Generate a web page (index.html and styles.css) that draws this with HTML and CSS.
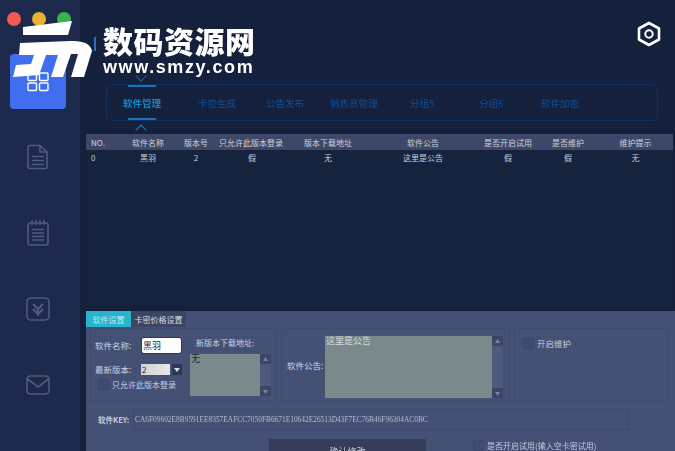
FILE: index.html
```html
<!DOCTYPE html>
<html lang="zh">
<head>
<meta charset="utf-8">
<title>软件管理</title>
<link rel="stylesheet" href="styles.css">
</head>
<body>
<div class="app">
  <aside class="sidebar">
    <div class="side-tile">
      <svg class="tile-icon" width="22" height="22" viewBox="0 0 22 22"><g fill="none" stroke="#fff" stroke-width="1.4"><rect x="1" y="2" width="8.5" height="7.5" rx="1"/><rect x="12.5" y="2" width="8.5" height="7.5" rx="1"/><rect x="1" y="12" width="8.5" height="7.5" rx="1"/><rect x="12.5" y="12" width="8.5" height="7.5" rx="1"/></g></svg>
    </div>
    <div class="side-item"><svg width="22" height="26" viewBox="0 0 22 26"><g fill="none" stroke="#4f5b7d" stroke-width="1.6"><path d="M2.5 1.5H13L20 8V23a1.5 1.5 0 0 1-1.5 1.5h-16A1.500 1.500 0 0 1 1 23V3a1.500 1.500 0 0 1 1.500-1.500Z"/><path d="M13 1.500V8H20M5 12.500H17M5 16.500H17M5 20.500H17"/></g></svg></div>
    <div class="side-item"><svg width="22" height="26" viewBox="0 0 22 26"><g fill="none" stroke="#4f5b7d" stroke-width="1.600"><rect x="1" y="3" width="20" height="22" rx="2"/><path d="M5 0V5M9 0V5M13 0V5M17 0V5"/><path d="M5 9.500H17M5 13H17M5 16.500H17M5 20H17"/></g></svg></div>
    <div class="side-item"><svg width="24" height="24" viewBox="0 0 24 24"><g fill="none" stroke="#4f5b7d" stroke-width="1.600"><rect x="1" y="1" width="22" height="22" rx="4"/><path d="M7 7L12 12L17 7M7 12L12 17L17 12M12 12V19" stroke-width="2.200"/></g></svg></div>
    <div class="side-item"><svg width="24" height="20" viewBox="0 0 24 20"><g fill="none" stroke="#4f5b7d" stroke-width="1.600"><rect x="1" y="1" width="22" height="18" rx="3.500"/><path d="M1.500 4L12 12L22.500 4"/></g></svg></div>
  </aside>

  <main class="main">
    <header class="topbar">
      <span class="title-bar"></span>
      <svg class="gear" width="24" height="26" viewBox="0 0 24 26"><path d="M12 2L22 7.500V18.500L12 24L2 18.500V7.500Z" fill="none" stroke="#fff" stroke-width="2.600" stroke-linejoin="round"/><circle cx="12" cy="13" r="3.700" fill="none" stroke="#fff" stroke-width="2"/></svg>
    </header>

    <nav class="nav">
      <span class="nav-tab active">软件管理</span>
      <span class="nav-tab">卡密生成</span>
      <span class="nav-tab">公告发布</span>
      <span class="nav-tab">销售员管理</span>
      <span class="nav-tab">分组5</span>
      <span class="nav-tab">分组6</span>
      <span class="nav-tab">软件加密</span>
    </nav>

    <section class="table">
      <div class="row head">
        <span class="left">NO.</span><span>软件名称</span><span>版本号</span><span class="clip">只允许此版本登录</span><span>版本下载地址</span><span>软件公告</span><span>是否开启试用</span><span>是否维护</span><span>维护提示</span>
      </div>
      <div class="row">
        <span class="left">0</span><span>黑羽</span><span>2</span><span>假</span><span>无</span><span>这里是公告</span><span>假</span><span>假</span><span>无</span>
      </div>
    </section>

    <section class="panel">
      <div class="tabs">
        <span class="tab on">软件设置</span>
        <span class="tab">卡密价格设置</span>
      </div>
      <div class="groups">
        <div class="group g1">
          <div class="g1-left">
            <div class="field"><span class="lbl">软件名称:</span><span class="input">黑羽</span></div>
            <div class="field"><span class="lbl">最新版本:</span><span class="select">2</span><span class="arrow"></span></div>
            <label class="check c1"><span class="box"></span>只允许此版本登录</label>
          </div>
          <div class="g1-right">
            <span class="lbl url">新版本下载地址:</span>
            <div class="area small"><span class="area-text">无</span><span class="scroll"><i>▲</i><i>▼</i></span></div>
          </div>
        </div>
        <div class="group g2">
          <span class="lbl">软件公告:</span>
          <div class="area big"><span class="area-text">这里是公告</span><span class="scroll"><i>▲</i><i>▼</i></span></div>
        </div>
        <div class="group g3">
          <label class="check"><span class="box"></span>开启维护</label>
        </div>
      </div>
      <div class="key-row">
        <span class="key-lbl">软件KEY:</span>
        <div class="key">CA6F09602E8B9591EE8357EAFCC7050FB6671E10642E26513D43F7EC76B46F96304AC0BC</div>
      </div>
      <div class="bottom">
        <span class="btn">确认修改</span>
        <label class="check"><span class="box"></span>是否开启试用(输入空卡密试用)</label>
      </div>
    </section>
  </main>
</div>

<div class="lights"><i class="red"></i><i class="amber"></i><i class="green"></i></div>

<div class="watermark">
  <svg width="95" height="62" viewBox="0 0 95 62"><path fill="#fff" d="M11 7L60 1L56 15H11ZM8 23L58 21Q78 20 80 31L72 57H59L66 34H59L51 57H39L46 35H34L27 55L1 57L4 45L19 44L22 35H7Z"/></svg>
  <div class="wm-text">
    <div class="wm-cn">数码资源网</div>
    <div class="wm-url">www.smzy.com</div>
  </div>
</div>
</body>
</html>
```

FILE: styles.css
```css
* { box-sizing: border-box; }
html, body { margin: 0; height: 100%; overflow: hidden; background: #14203c; }
body { font-family: "Noto Sans CJK SC", "Noto Sans", sans-serif; font-size: 8px; color: #c8cfdc; }

.app { display: flex; width: 675px; height: 451px; overflow: hidden; filter: blur(0.35px); }

/* sidebar */
.sidebar { width: 80px; flex: none; background: #1e2a4b; display: flex; flex-direction: column; align-items: stretch; padding: 54px 14px 0 10px; }
.side-tile { width: 56px; height: 55px; background: #3f6ff0; border-radius: 4px; display: flex; justify-content: center; align-items: flex-end; padding-bottom: 16px; flex: none; }
.side-item { height: 76px; display: flex; justify-content: center; align-items: center; flex: none; }
.side-tile + .side-item { margin-top: 10px; }

/* main */
.main { flex: 1; min-width: 0; display: flex; flex-direction: column; padding-left: 6px; }
.topbar { height: 84px; flex: none; display: flex; justify-content: space-between; align-items: flex-start; padding: 21px 14px 0 8px; }
.title-bar { width: 2px; height: 14px; background: #2f6fc0; margin-top: 16px; }
.gear { flex: none; }

.nav { height: 37px; flex: none; margin: 0 17px 0 20px; padding-left: 16px; border: 1px solid #12305f; border-radius: 6px; display: grid; grid-template-columns: 75px 68px 64px 80px 69px 62px auto; align-items: center; position: relative; }
.nav-tab { color: #0f4f9a; font-size: 9.500px; white-space: nowrap; position: relative; }
.nav-tab.active { color: #1487c9; font-weight: 700; }
.nav-tab.active::before, .nav-tab.active::after { content: ""; position: absolute; left: 5px; width: 28px; height: 2px; background: #1a73b5; }
.nav-tab.active::before { top: -11px; }
.nav-tab.active::after { bottom: -10px; }
.nav::before, .nav::after { content: ""; position: absolute; left: 30px; width: 7px; height: 7px; border-left: 1.500px solid #1f7fc0; border-top: 1.500px solid #1f7fc0; }
.nav::before { top: -13px; transform: rotate(225deg); border-color: #1a5f9c; }
.nav::after { bottom: -14px; transform: rotate(45deg); }

.table { margin: 13px 2px 0 0; height: 171px; flex: none; background: #15233d; }
.row { display: grid; grid-template-columns: 34px 56px 40px 72px 80px 110px 60px 60px 75px; height: 15px; align-items: center; text-align: center; font-size: 8px; }
.row span { white-space: nowrap; overflow: hidden; }
.row .left { text-align: left; padding-left: 5px; }
.row .clip { direction: rtl; padding: 0 5px; }
.head { background: #3d4767; height: 16px; color: #cdd3df; }

/* settings panel */
.panel { flex: 1; min-height: 0; margin-top: 6px; background: #455174; }
.tabs { display: flex; height: 16px; }
.tab { width: 55px; background: #3a4565; display: flex; align-items: center; justify-content: center; font-size: 8px; color: #d7dbe6; }
.tab.on { width: 45px; background: #27b4cf; color: #bdeaf2; }
.groups { display: flex; margin: 1px 7px 0 4px; gap: 4px; height: 74px; }
.group { border: 1px solid #3f4b6e; border-radius: 1px; flex: none; }
.lbl { color: #ccd2e0; white-space: nowrap; font-size: 8.500px; }

.g1 { width: 187px; display: flex; padding: 8px 5px 0 4px; }
.g1-left { width: 95px; flex: none; display: flex; flex-direction: column; }
.field { display: flex; align-items: center; height: 16px; margin-bottom: 8px; }
.field .lbl { width: 47px; flex: none; }
.field .select { margin-left: -1px; }
.input { width: 39px; height: 15px; background: #fff; color: #222; border-radius: 2px; padding-left: 1px; font-size: 9px; line-height: 15px; box-shadow: 0 0 0 1px #2e3a5c; }
.select { width: 29px; height: 11px; background: linear-gradient(90deg, #cfd2d4, #e8e8e8); color: #223; line-height: 11px; font-size: 8px; padding-left: 1px; }
.arrow { width: 10px; height: 11px; margin-left: 2px; background: #2d3857; position: relative; }
.arrow::after { content: ""; position: absolute; left: 2px; top: 4px; border: 3px solid transparent; border-top: 4px solid #d8dce6; }
.check { display: flex; align-items: center; gap: 3px; color: #c5cce0; font-size: 8px; white-space: nowrap; }
.c1 { padding-left: 3px; margin-top: -6px; }
.box { width: 11px; height: 11px; flex: none; background: #414d70; border: 1px solid #3a4668; border-radius: 2px; }

.g1-right { flex: 1; display: flex; flex-direction: column; align-items: flex-start; }
.url { margin: 0 0 6px 6px; font-size: 8px; }
.area { display: flex; background: #7a8a8b; }
.area-text { flex: 1; color: #1d2436; font-size: 9px; line-height: 10px; padding-left: 1px; }
.scroll { background: #4d5a7c; display: flex; flex-direction: column; justify-content: space-between; }
.scroll i { height: 10px; background: #3b4666; color: #7a86a0; font-style: normal; font-size: 5px; line-height: 10px; text-align: center; }
.small { width: 81px; height: 42px; }
.small .scroll, .big .scroll { width: 11px; flex: none; }
.g2 { width: 229px; display: flex; align-items: center; padding: 0 4px 0 5px; }
.g2 .lbl { width: 38px; flex: none; }
.big { width: 178px; height: 62px; margin-top: 4px; }
.big .area-text { color: #d4d8dc; }
.g3 { width: 154px; padding: 8px 0 0 8px; }
.g3 .check { font-size: 8.500px; }

.key-row { display: flex; align-items: center; margin: 7px 0 0 12px; height: 21px; }
.key-lbl { width: 35px; flex: none; font-size: 7.500px; font-weight: 700; color: #c5cce0; }
.key { width: 496px; height: 21px; border: 1px solid #3d496c; padding-left: 1px; font-family: "Liberation Serif", serif; font-size: 7.400px; line-height: 19px; color: #b3bbce; white-space: nowrap; overflow: hidden; }
.bottom { display: flex; margin-top: 9px; padding-left: 183px; gap: 47px; }
.btn { width: 157px; height: 30px; background: #363d58; color: #c8cfdc; font-size: 9px; text-align: center; padding-top: 6px; }
.bottom .check { align-self: flex-start; margin-top: 1px; }

/* overlays */
.lights { position: absolute; left: 7px; top: 12px; display: flex; gap: 11px; }
.lights i { width: 14px; height: 14px; border-radius: 50%; }
.red { background: #f05a50; }
.amber { background: #e8b32f; }
.green { background: #36b54a; }

.watermark { position: absolute; left: 12px; top: 20px; display: flex; color: #fff; }
.watermark svg { flex: none; margin-right: -4px; }
.wm-text { padding-top: 3px; }
.wm-cn { font-size: 30px; font-weight: 900; line-height: 34px; letter-spacing: 0.500px; white-space: nowrap; }
.wm-url { font-family: "Liberation Sans", sans-serif; font-weight: 700; font-size: 18px; line-height: 20px; letter-spacing: 1.600px; white-space: nowrap; }
```
